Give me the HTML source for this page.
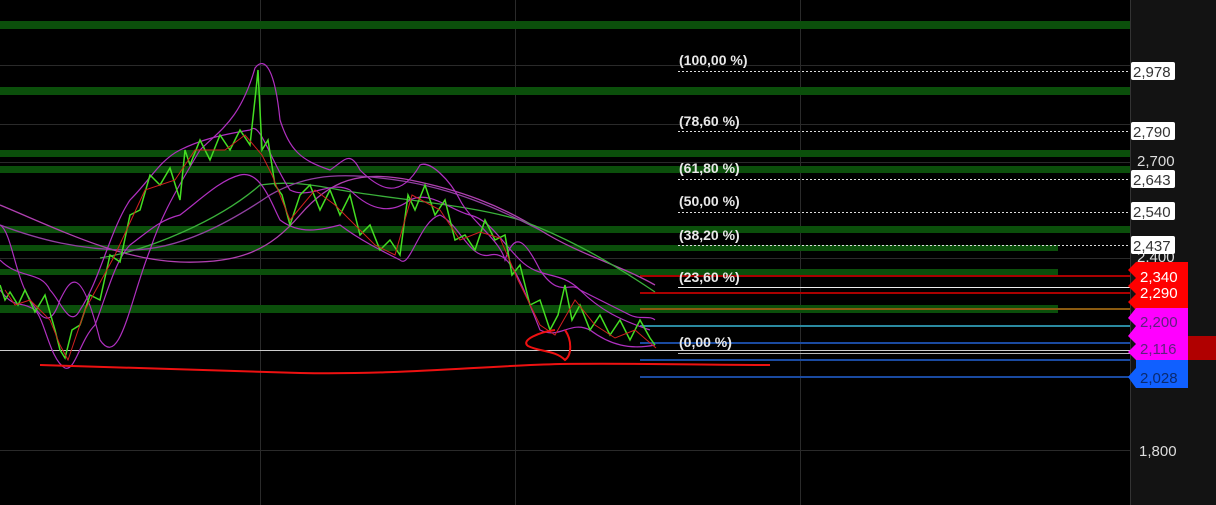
<!DOCTYPE html>
<html><head><meta charset="utf-8"><style>
html,body{margin:0;padding:0;background:#000;width:1216px;height:505px;overflow:hidden}
svg{display:block}
text{font-family:"Liberation Sans",sans-serif}
</style></head><body>
<svg width="1216" height="505" viewBox="0 0 1216 505" xmlns="http://www.w3.org/2000/svg">
<rect width="1216" height="505" fill="#000"/>
<rect x="1130" y="0" width="86" height="505" fill="#131313"/>
<line x1="1130.5" y1="0" x2="1130.5" y2="505" stroke="#333"/>
<g stroke="#2a2a2a" stroke-width="1">
<line x1="260.5" y1="0" x2="260.5" y2="505"/>
<line x1="515.5" y1="0" x2="515.5" y2="505"/>
<line x1="800.5" y1="0" x2="800.5" y2="505"/>
<line x1="0" y1="65.5" x2="1130" y2="65.5"/>
<line x1="0" y1="124.5" x2="1130" y2="124.5"/>
<line x1="0" y1="162.5" x2="1130" y2="162.5"/>
<line x1="0" y1="258.5" x2="1130" y2="258.5"/>
<line x1="0" y1="450.5" x2="1130" y2="450.5"/>
</g>
<g fill="#0b4f0b">
<rect x="0" y="21" width="1130" height="8"/>
<rect x="0" y="87" width="1130" height="8"/>
<rect x="0" y="150" width="1130" height="7"/>
<rect x="0" y="166" width="1130" height="7"/>
<rect x="0" y="226" width="1130" height="7"/>
<rect x="0" y="245" width="1058" height="6"/>
<rect x="0" y="269" width="1058" height="6"/>
<rect x="0" y="305" width="1058" height="8"/>
</g>
<g stroke="#ddd" stroke-width="1" stroke-dasharray="2,2">
<line x1="678" y1="71.5" x2="1130" y2="71.5"/>
<line x1="678" y1="131.5" x2="1130" y2="131.5"/>
<line x1="678" y1="179.5" x2="1130" y2="179.5"/>
<line x1="678" y1="212.5" x2="1130" y2="212.5"/>
<line x1="678" y1="245.5" x2="1130" y2="245.5"/>
</g>
<line x1="678" y1="287.5" x2="1130" y2="287.5" stroke="#eee"/>
<line x1="678" y1="353.5" x2="1130" y2="353.5" stroke="#bbb"/>
<line x1="0" y1="350.5" x2="1130" y2="350.5" stroke="#ccc"/>
<g stroke-width="2">
<line x1="640" y1="276" x2="1130" y2="276" stroke="#a00"/>
<line x1="640" y1="293" x2="1130" y2="293" stroke="#a00"/>
<line x1="640" y1="309" x2="1130" y2="309" stroke="#8a5a10"/>
<line x1="640" y1="326" x2="1130" y2="326" stroke="#2a8aa0"/>
<line x1="640" y1="343" x2="1130" y2="343" stroke="#1a4aa0"/>
<line x1="640" y1="360" x2="1130" y2="360" stroke="#1a4aa0"/>
<line x1="640" y1="377" x2="1130" y2="377" stroke="#1a4aa0"/>
</g>
<g fill="none" stroke-width="1.3">
<path d="M0,205 C60,230 120,260 180,262 C240,264 270,250 300,215 C330,180 360,170 410,180 C460,190 500,205 540,230 C580,255 620,265 655,285" stroke="#b040b0"/>
<path d="M100,258 C150,250 220,220 260,185 C280,182 300,182 340,190 C400,200 470,205 520,220 C560,235 600,255 655,292" stroke="#3ab03a"/>
<path d="M0,225 C40,240 80,250 130,250 C180,250 230,222 270,195 C300,178 330,172 380,178 C450,185 500,210 540,230" stroke="#9040a0"/>
</g>
<g fill="none" stroke="#b030c0" stroke-width="1.2">
<path d="M0,225 C10,230 15,270 25,290 C40,320 50,330 60,300 C70,280 80,260 100,340 C120,370 130,300 150,250 C160,220 170,200 200,150 C220,130 240,120 255,68 C265,55 275,70 280,120 C290,150 300,160 330,170 C345,160 350,150 360,170 C380,190 400,200 420,165 C430,160 450,180 460,200 C470,220 500,240 505,260 C515,230 525,240 540,270 C560,300 570,280 580,290 C600,300 620,310 630,315 C640,320 650,315 655,320"/>
<path d="M0,290 C15,310 20,300 35,310 C45,320 50,360 65,368 C75,372 80,340 95,325 C105,300 115,260 130,245 C150,230 160,220 180,215 C200,200 220,180 240,175 C260,170 270,200 280,220 C300,235 320,230 340,225 C360,240 380,250 400,260 C410,270 420,220 440,215 C460,225 470,260 490,255 C510,250 520,280 540,330 C560,340 570,320 590,330 C610,345 630,350 655,345"/>
<path d="M0,260 C20,280 40,270 50,290 C60,300 70,330 80,310 C100,280 110,230 130,200 C150,180 160,160 180,150 C200,140 220,135 250,130 C260,120 270,160 290,190 C310,200 330,180 350,190 C370,210 390,215 410,200 C430,190 450,210 470,215 C490,220 500,240 520,260 C540,280 560,270 580,290 C600,310 620,320 650,330"/>
</g>
<g stroke-width="1.5" fill="none">
<path d="M0,285 L5,300 L10,292 L18,305 L25,290 L35,312 L45,295 L55,330 L60,350 L65,358 L72,330 L80,325 L90,295 L100,300 L110,255 L120,262 L130,215 L140,210 L150,175 L160,185 L170,168 L180,200 L185,150 L190,165 L200,140 L210,160 L220,135 L230,150 L240,130 L250,145 L256,90 L258,70 L262,150 L268,140 L275,185 L282,195 L290,225 L300,195 L310,185 L320,210 L330,190 L340,215 L350,195 L360,235 L370,225 L380,250 L390,240 L400,255 L408,195 L415,210 L425,185 L435,215 L445,200 L455,240 L465,235 L475,250 L485,220 L495,240 L505,235 L512,275 L520,265 L530,305 L540,300 L550,330 L558,315 L565,285 L572,320 L580,305 L590,330 L600,315 L610,335 L620,320 L630,340 L640,320 L650,338 L655,345" stroke="#44dd22"/>
<path d="M5,290 L15,305 L30,300 L50,320 L60,345 L68,360 L85,310 L115,255 L145,190 L175,180 L195,150 L225,150 L245,135 L262,155 L272,175 L290,220 L315,190 L335,205 L355,225 L375,245 L395,255 L412,195 L440,210 L460,240 L480,232 L500,238 L518,280 L540,325 L555,335 L575,300 L595,325 L615,338 L635,330 L656,348" stroke="#d02020" stroke-width="1"/>
</g>
<g fill="none" stroke="#ee1111" stroke-width="2">
<path d="M40,365 C120,367 200,370 300,373 C400,375 480,366 560,364 C640,363 700,365 770,365"/>
<path d="M555,330 C540,332 520,340 528,346 C540,352 555,350 565,360 C572,355 572,340 565,330"/>
</g>
<g fill="#e8e8e8" font-size="14" font-weight="bold">
<text x="679" y="65">(100,00 %)</text>
<text x="679" y="126">(78,60 %)</text>
<text x="679" y="173">(61,80 %)</text>
<text x="679" y="206">(50,00 %)</text>
<text x="679" y="240">(38,20 %)</text>
<text x="679" y="282">(23,60 %)</text>
<text x="679" y="347">(0,00 %)</text>
</g>
<g font-size="15" fill="#ddd">
<text x="1137" y="166">2,700</text>
<text x="1137" y="262">2,400</text>
<text x="1139" y="456">1,800</text>
</g>
<g font-size="15" fill="#333">
<rect x="1131" y="62" width="44" height="18" rx="2" fill="#fff"/><text x="1133" y="77">2,978</text>
<rect x="1131" y="122" width="44" height="18" rx="2" fill="#fff"/><text x="1133" y="137">2,790</text>
<rect x="1131" y="170" width="44" height="18" rx="2" fill="#fff"/><text x="1133" y="185">2,643</text>
<rect x="1131" y="202" width="44" height="18" rx="2" fill="#fff"/><text x="1133" y="217">2,540</text>
<rect x="1131" y="236" width="44" height="18" rx="2" fill="#fff"/><text x="1133" y="251">2,437</text>
</g>
<rect x="1188" y="336" width="28" height="24" fill="#b00000"/>
<polygon points="1136,262 1188,262 1188,310 1136,310 1128,302 1136,294 1128,286 1136,278 1128,270" fill="#ff0000"/>
<polygon points="1136,308 1188,308 1188,360 1136,360 1128,352 1136,344 1128,336 1136,326 1128,318" fill="#ff00ff"/>
<polygon points="1136,360 1188,360 1188,388 1136,388 1128,377 1136,368" fill="#1060ff"/>
<g font-size="15">
<text x="1140" y="282" fill="#fff">2,340</text>
<text x="1140" y="298" fill="#fff">2,290</text>
<text x="1140" y="327" fill="#602080">2,200</text>
<text x="1140" y="354" fill="#602080">2,116</text>
<text x="1140" y="383" fill="#0a2a70">2,028</text>
</g>
</svg>
</body></html>
